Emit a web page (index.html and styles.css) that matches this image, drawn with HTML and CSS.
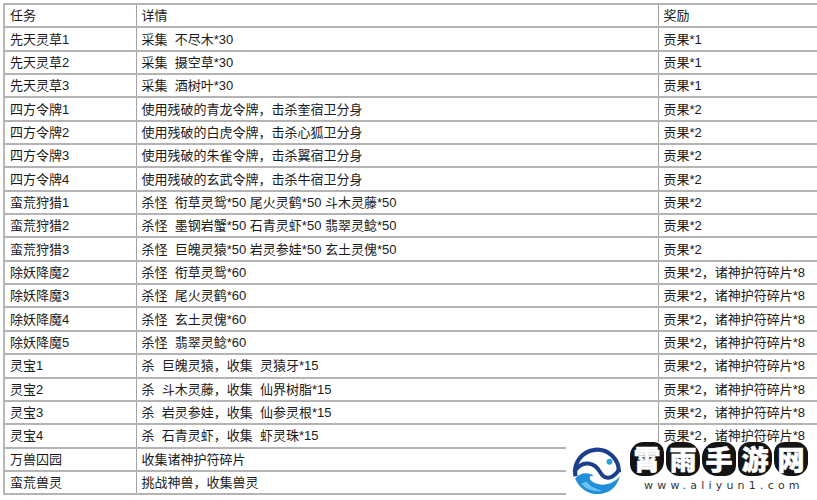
FILE: index.html
```html
<!DOCTYPE html>
<html lang="zh">
<head>
<meta charset="utf-8">
<link rel="stylesheet" href="styles.css">
</head>
<body>
<div class="page">
<table class="tasks">
<colgroup><col class="c1"><col class="c2"><col class="c3"></colgroup>
<tr><td>任务</td><td>详情</td><td>奖励</td></tr>
<tr><td>先天灵草1</td><td>采集  不尽木*30</td><td>贡果*1</td></tr>
<tr><td>先天灵草2</td><td>采集  摄空草*30</td><td>贡果*1</td></tr>
<tr><td>先天灵草3</td><td>采集  酒树叶*30</td><td>贡果*1</td></tr>
<tr><td>四方令牌1</td><td>使用残破的青龙令牌，击杀奎宿卫分身</td><td>贡果*2</td></tr>
<tr><td>四方令牌2</td><td>使用残破的白虎令牌，击杀心狐卫分身</td><td>贡果*2</td></tr>
<tr><td>四方令牌3</td><td>使用残破的朱雀令牌，击杀翼宿卫分身</td><td>贡果*2</td></tr>
<tr><td>四方令牌4</td><td>使用残破的玄武令牌，击杀牛宿卫分身</td><td>贡果*2</td></tr>
<tr><td>蛮荒狩猎1</td><td>杀怪  衔草灵鸳*50 尾火灵鹤*50 斗木灵藤*50</td><td>贡果*2</td></tr>
<tr><td>蛮荒狩猎2</td><td>杀怪  墨钢岩蟹*50 石青灵虾*50 翡翠灵鲶*50</td><td>贡果*2</td></tr>
<tr><td>蛮荒狩猎3</td><td>杀怪  巨魄灵猿*50 岩灵参娃*50 玄土灵傀*50</td><td>贡果*2</td></tr>
<tr><td>除妖降魔2</td><td>杀怪  衔草灵鸳*60</td><td>贡果*2，诸神护符碎片*8</td></tr>
<tr><td>除妖降魔3</td><td>杀怪  尾火灵鹤*60</td><td>贡果*2，诸神护符碎片*8</td></tr>
<tr><td>除妖降魔4</td><td>杀怪  玄土灵傀*60</td><td>贡果*2，诸神护符碎片*8</td></tr>
<tr><td>除妖降魔5</td><td>杀怪  翡翠灵鲶*60</td><td>贡果*2，诸神护符碎片*8</td></tr>
<tr><td>灵宝1</td><td>杀  巨魄灵猿，收集  灵猿牙*15</td><td>贡果*2，诸神护符碎片*8</td></tr>
<tr><td>灵宝2</td><td>杀  斗木灵藤，收集  仙界树脂*15</td><td>贡果*2，诸神护符碎片*8</td></tr>
<tr><td>灵宝3</td><td>杀  岩灵参娃，收集  仙参灵根*15</td><td>贡果*2，诸神护符碎片*8</td></tr>
<tr><td>灵宝4</td><td>杀  石青灵虾，收集  虾灵珠*15</td><td>贡果*2，诸神护符碎片*8</td></tr>
<tr><td>万兽囚园</td><td>收集诸神护符碎片</td><td></td></tr>
<tr><td>蛮荒兽灵</td><td>挑战神兽，收集兽灵</td><td></td></tr>
</table>

<div class="watermark">
  <svg class="emblem" width="50" height="50" viewBox="2 2 48 48">
    <path d="M5.5,33 A21,21 0 1 1 47,29" fill="none" stroke="#1c3f8c" stroke-width="4"/>
    <path d="M4,29 C12,16 24,20 29,29 C34,38 42,35 47.5,26" fill="none" stroke="#1c3f8c" stroke-width="3.8"/>
    <circle cx="38" cy="19" r="2.8" fill="#2aa2e2"/>
    <path d="M5,35 C9,45 18,50 27,50 C37,50 45,44 48,33 C41,41 31,43 23,39 C17,36 18,31 24,33 C17,28 9,30 5,35Z" fill="#1e8fd8"/>
    <path d="M11,40 C15,46 23,48 31,47 C25,45 19,43 16,38 Z" fill="#6cc4f0"/>
  </svg>
  <div class="brand">
    <div class="chars"><span class="ch b1">霄</span><span class="ch b2">雨</span><span class="ch b3">手</span><span class="ch b4">游</span><span class="ch b5">网</span></div>
    <div class="url">www.aliyun1.com</div>
  </div>
</div>
</div>
</body>
</html>
```
FILE: styles.css
```css
html, body {
  margin: 0;
  padding: 0;
  background: #fff;
  overflow: hidden;
}
.page {
  position: relative;
  width: 817px;
  height: 500px;
  overflow: hidden;
  padding: 3px 0 0 3px;
  box-sizing: border-box;
}
.tasks {
  border-collapse: collapse;
  table-layout: fixed;
  width: 840px;
  font-family: "Liberation Sans", "Noto Sans CJK SC", sans-serif;
  font-size: 13px;
  color: #1a1a1a;
}
.c1 { width: 132px; }
.c2 { width: 522px; }
.c3 { width: 186px; }
.tasks td {
  border: 1px solid #a3a3a3;
  border-bottom: 2px solid #b4b4b4;
  height: 21.35px;
  padding: 0 0 0 5px;
  white-space: pre;
  overflow: hidden;
  vertical-align: middle;
  line-height: 15px;
}
.tasks td:first-child {
  border-left: 2px solid #b8b8b8;
}
.tasks tr:first-child td {
  border-top: 2px solid #b4b4b4;
}
.watermark {
  position: absolute;
  left: 566px;
  top: 442px;
  width: 251px;
  height: 58px;
  background: #fff;
  display: flex;
  align-items: flex-start;
  gap: 8px;
  padding: 0 0 0 6px;
  box-sizing: border-box;
}
.emblem {
  flex: none;
  margin-top: 2px;
}
.brand {
  display: flex;
  flex-direction: column;
  align-items: flex-start;
}
.chars {
  display: flex;
  gap: 2px;
}
.ch {
  width: 34px;
  height: 34px;
  background: #141414;
  color: #fff;
  font-family: "Noto Sans CJK SC", sans-serif;
  font-weight: 900;
  font-size: 27px;
  line-height: 34px;
  text-align: center;
  -webkit-text-stroke: 0.5px #fff;
}
.b1 { border-radius: 40% 30% 45% 35%; }
.b2 { border-radius: 30% 45% 35% 40%; }
.b3 { border-radius: 45% 35% 30% 45%; }
.b4 { border-radius: 35% 40% 45% 30%; }
.b5 { border-radius: 30% 35% 40% 45%; }
.url {
  margin-top: 4px;
  margin-left: 14px;
  font-family: "DejaVu Sans", sans-serif;
  font-size: 11px;
  letter-spacing: 4.2px;
  color: #333;
  line-height: 12px;
}
```
